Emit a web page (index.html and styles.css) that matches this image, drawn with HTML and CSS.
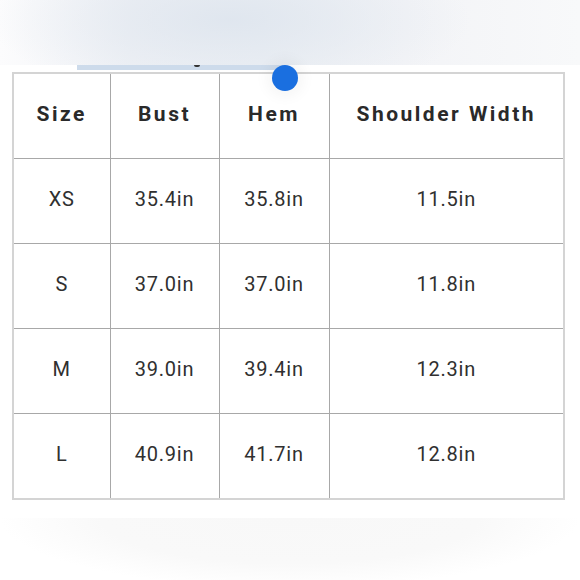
FILE: index.html
```html
<!DOCTYPE html>
<html>
<head>
<meta charset="utf-8">
<link rel="stylesheet" href="styles.css">
</head>
<body>
<div class="band"></div>
<div class="slider"><span class="tick"></span></div>
<div class="dot"></div>
<table class="size-table">
  <colgroup>
    <col class="c1"><col class="c2"><col class="c3"><col class="c4">
  </colgroup>
  <thead>
    <tr><th>Size</th><th>Bust</th><th>Hem</th><th>Shoulder Width</th></tr>
  </thead>
  <tbody>
    <tr><td>XS</td><td>35.4in</td><td>35.8in</td><td>11.5in</td></tr>
    <tr><td>S</td><td>37.0in</td><td>37.0in</td><td>11.8in</td></tr>
    <tr><td>M</td><td>39.0in</td><td>39.4in</td><td>12.3in</td></tr>
    <tr><td>L</td><td>40.9in</td><td>41.7in</td><td>12.8in</td></tr>
  </tbody>
</table>
<div class="shade"></div>
</body>
</html>
```
FILE: styles.css
```css
html, body {
  margin: 0;
  padding: 0;
  background: #ffffff;
  width: 580px;
  height: 580px;
  overflow: hidden;
}
body {
  font-family: Roboto, "Noto Sans", sans-serif;
  color: #2b2b2b;
  position: relative;
}
.band {
  height: 65px;
  background:
    radial-gradient(ellipse 240px 80px at 230px 20px, rgba(222,229,238,0.9), rgba(222,229,238,0) 100%),
    linear-gradient(90deg, #fcfcfd 0%, #f0f2f6 22%, #eef1f5 45%, #f3f4f7 70%, #f8f9fa 100%);
}
.slider {
  position: relative;
  height: 5px;
  width: 208px;
  margin-left: 77px;
  background: #cddbeb;
}
.tick {
  position: absolute;
  left: 117px;
  top: 0;
  width: 6px;
  height: 2px;
  border-radius: 0 0 3px 3px;
  background: #333;
}
.dot {
  position: absolute;
  left: 272px;
  top: 65px;
  width: 26px;
  height: 26px;
  border-radius: 50%;
  background: #1a6fe0;
  box-shadow: 0 0 14px 6px rgba(0,0,0,0.04);
}
.size-table {
  margin: 2px 0 0 12px;
  border-collapse: collapse;
  border: 2px solid #d4d4d4;
  table-layout: fixed;
  width: 551px;
}
.c1 { width: 97px; }
.c2 { width: 109px; }
.c3 { width: 110px; }
.c4 { width: 235px; }
.size-table th,
.size-table td {
  border: 1px solid #a8a8a8;
  height: 79px;
  padding: 0 0 5px 0;
  text-align: center;
  vertical-align: middle;
}
.size-table th {
  font-size: 21px;
  font-weight: 700;
  letter-spacing: 2.5px;
  color: #2a2a2a;
}
.size-table td {
  font-size: 20px;
  font-weight: 400;
  letter-spacing: 0.8px;
  color: #303030;
}
.shade {
  margin-top: 18px;
  height: 62px;
  background: radial-gradient(ellipse 290px 70px at 290px 0px, #f8f8f8 0%, #f9f9f9 65%, rgba(255,255,255,0) 100%);
}
```
